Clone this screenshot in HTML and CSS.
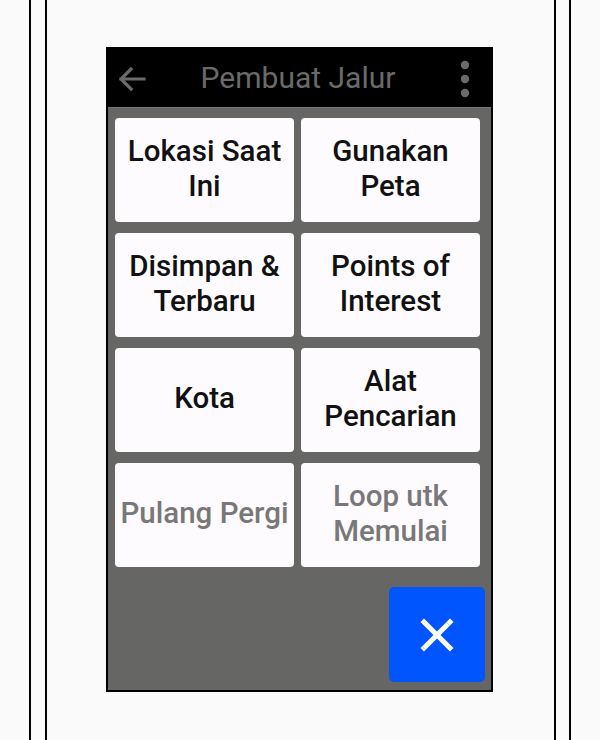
FILE: index.html
```html
<!DOCTYPE html>
<html>
<head>
<meta charset="utf-8">
<link rel="stylesheet" href="styles.css">
</head>
<body>
<div class="outer">
  <div class="inner">
    <div class="device">
      <div class="header">
        <svg class="back" width="28" height="26" viewBox="0 0 28 26">
          <path d="M26 13H3M13 3L3 13L13 23" fill="none" stroke="#6a6a6a" stroke-width="3.2" stroke-linecap="square"/>
        </svg>
        <div class="title">Pembuat Jalur</div>
        <svg class="menu" width="10" height="38" viewBox="0 0 10 38">
          <circle cx="5" cy="5" r="4.2" fill="#6a6a6a"/>
          <circle cx="5" cy="19" r="4.2" fill="#6a6a6a"/>
          <circle cx="5" cy="33" r="4.2" fill="#6a6a6a"/>
        </svg>
      </div>
      <div class="body">
        <div class="grid">
          <div class="btn">Lokasi Saat Ini</div>
          <div class="btn">Gunakan<br>Peta</div>
          <div class="btn">Disimpan &amp;<br>Terbaru</div>
          <div class="btn">Points of<br>Interest</div>
          <div class="btn">Kota</div>
          <div class="btn">Alat<br>Pencarian</div>
          <div class="btn disabled">Pulang Pergi</div>
          <div class="btn disabled">Loop utk<br>Memulai</div>
        </div>
        <div class="footer">
          <div class="close">
            <svg width="34" height="34" viewBox="0 0 34 34">
              <path d="M4 4L30 30M30 4L4 30" stroke="#fff" stroke-width="5" stroke-linecap="square"/>
            </svg>
          </div>
        </div>
      </div>
    </div>
  </div>
</div>
</body>
</html>
```
FILE: styles.css
```css
html, body {
  margin: 0;
  padding: 0;
  background: #fafafa;
}
body {
  width: 600px;
  height: 740px;
  overflow: hidden;
  font-family: Roboto, "Liberation Sans", sans-serif;
}
.outer {
  margin-left: 29px;
  width: 538px;
  height: 740px;
  border-left: 2px solid #000;
  border-right: 2px solid #000;
}
.inner {
  margin-left: 14px;
  width: 511px;
  height: 740px;
  border-left: 2px solid #000;
  border-right: 2px solid #000;
  padding-top: 47px;
  box-sizing: border-box;
}
.device {
  margin-left: 59px;
  width: 383px;
  height: 641px;
  border: 2px solid #000;
  display: flex;
  flex-direction: column;
  background: #666665;
}
.header {
  height: 58px;
  background: #000;
  display: flex;
  align-items: center;
  position: relative;
  flex: none;
}
.back {
  margin-left: 10px;
  margin-top: 1px;
}
.title {
  flex: 1;
  text-align: center;
  color: #6a6a6a;
  font-size: 30px;
  margin-right: 10px;
  padding-bottom: 1px;
}
.menu {
  margin-right: 21px;
  margin-top: 2px;
}
.body {
  flex: 1;
  display: flex;
  flex-direction: column;
  padding: 10px 11px 8px 7px;
  border-top: 1px solid #777;
  box-sizing: border-box;
}
.grid {
  display: grid;
  grid-template-columns: 179px 179px;
  grid-auto-rows: 104px;
  column-gap: 7px;
  row-gap: 11px;
}
.btn {
  background: #fdfbfd;
  border-radius: 4px;
  display: flex;
  align-items: center;
  justify-content: center;
  text-align: center;
  font-size: 29.5px;
  font-weight: 500;
  line-height: 35px;
  color: #111;
  padding: 0 0 3px 0;
}
.btn.disabled {
  color: #787878;
}
.footer {
  flex: 1;
  display: flex;
  justify-content: flex-end;
  align-items: flex-end;
  margin-right: -5px;
}
.close {
  width: 96px;
  height: 95px;
  background: #0055fe;
  border-radius: 5px;
  display: flex;
  align-items: center;
  justify-content: center;
}
```
